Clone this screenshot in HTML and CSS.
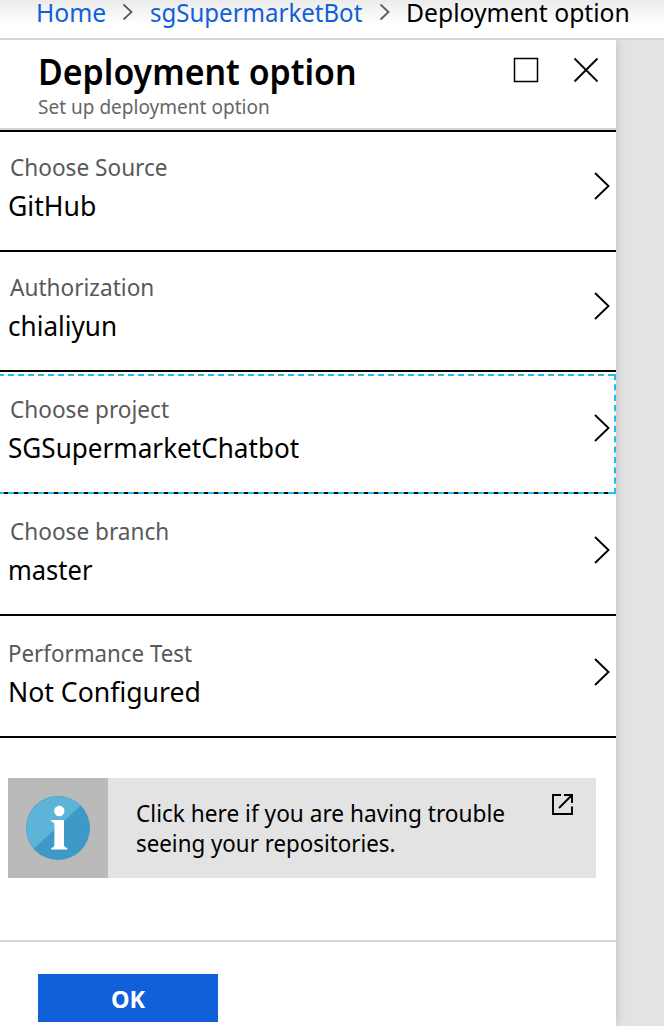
FILE: index.html
```html
<!DOCTYPE html>
<html lang="en">
<head>
<meta charset="utf-8">
<title>Deployment option</title>
<link rel="stylesheet" href="styles.css">
</head>
<body>
<nav class="crumbs">
  <a class="crumb home">Home</a>
  <svg class="sep" width="11" height="18" viewBox="0 0 11 18"><path d="M1.500 1.500L9.500 9L1.500 16.500"/></svg>
  <a class="crumb bot">sgSupermarketBot</a>
  <svg class="sep" width="11" height="18" viewBox="0 0 11 18"><path d="M1.500 1.500L9.500 9L1.500 16.500"/></svg>
  <span class="crumb current">Deployment option</span>
</nav>
<main class="blade">
  <header class="head">
    <div class="heading">
      <h1 class="title">Deployment option</h1>
      <p class="subtitle">Set up deployment option</p>
    </div>
    <svg class="maximize" width="26" height="26" viewBox="0 0 26 26"><rect x="1.500" y="1.500" width="23" height="23"/></svg>
    <svg class="close" width="26" height="26" viewBox="0 0 26 26"><path d="M1.500 1.500L24.500 24.500M24.500 1.500L1.500 24.500"/></svg>
  </header>
  <section class="row">
    <div><div class="label">Choose Source</div><div class="value wide">GitHub</div></div>
    <svg class="arrow" width="18" height="30" viewBox="0 0 18 30"><path d="M2 2L15.500 15L2 28"/></svg>
  </section>
  <section class="row">
    <div><div class="label">Authorization</div><div class="value">chialiyun</div></div>
    <svg class="arrow" width="18" height="30" viewBox="0 0 18 30"><path d="M2 2L15.500 15L2 28"/></svg>
  </section>
  <section class="row tall">
    <div><div class="label">Choose project</div><div class="value">SGSupermarketChatbot</div></div>
    <svg class="arrow" width="18" height="30" viewBox="0 0 18 30"><path d="M2 2L15.500 15L2 28"/></svg>
    <svg class="focus" width="616" height="120" viewBox="0 0 616 120">
      <path stroke-dasharray="6 4" stroke-dashoffset="2" d="M0 1H616M0 119H616"/>
      <path stroke-dasharray="6.200 4.160" d="M615 0V120"/>
    </svg>
  </section>
  <section class="row tall">
    <div><div class="label">Choose branch</div><div class="value narrow">master</div></div>
    <svg class="arrow" width="18" height="30" viewBox="0 0 18 30"><path d="M2 2L15.500 15L2 28"/></svg>
  </section>
  <section class="row tall">
    <div><div class="label performance">Performance Test</div><div class="value wide">Not Configured</div></div>
    <svg class="arrow" width="18" height="30" viewBox="0 0 18 30"><path d="M2 2L15.500 15L2 28"/></svg>
  </section>
  <aside class="notice">
    <div class="badge">
      <svg width="64" height="64" viewBox="0 0 64 64">
        <circle cx="32" cy="32" r="32" fill="#3e99c7"/>
        <path d="M7.600 52.700A32 32 0 0 1 54.800 9.600Z" fill="#5eb4d8"/>
        <circle cx="33.300" cy="15" r="5.200" fill="#fff"/>
        <path d="M25.200 24H38V48.500Q38 51.500 41.300 52V53.500H25.200V52Q28.400 51.500 28.400 48.500V29Q28.400 26 25.200 25.600Z" fill="#fff"/>
      </svg>
    </div>
    <div class="message"><div class="line">Click here if you are having trouble</div><div class="line second">seeing your repositories.</div></div>
    <svg class="external" width="24" height="24" viewBox="0 0 24 24"><path d="M10 2H2V21H21V13.500M13 2H21V10M8 15L20.500 2.500"/></svg>
  </aside>
  <footer class="foot"><button class="ok">OK</button></footer>
</main>
</body>
</html>
```
FILE: styles.css
```css
* { box-sizing: border-box; }
body {
  margin: 0;
  width: 664px;
  height: 1026px;
  overflow: hidden;
  background: #e3e3e3;
  color: #000;
  font-family: "Noto Sans", "Open Sans", sans-serif;
}
svg { display: block; flex: none; fill: none; }
.crumbs {
  display: flex;
  height: 40px;
  padding-left: 36px;
  background: linear-gradient(#ebebeb 0, #fff 24px);
  border-bottom: 2px solid #d4d4d4;
  white-space: nowrap;
}
.crumb {
  flex: none;
  height: 26px;
  font-size: 26px;
  line-height: 25px;
  color: #1160d9;
  transform: scaleX(.95);
  transform-origin: left;
}
.home { width: 86px; }
.bot { width: 229px; transform: scaleX(.924); }
.current { color: #000; margin-left: 16px; }
.sep { margin-top: 3px; stroke: #5c5c5c; stroke-width: 1.8; }
.home + .sep { margin-right: 17px; }
.blade {
  width: 616px;
  height: 986px;
  background: #fff;
  box-shadow: 0 0 10px rgba(0, 0, 0, .18);
  clip-path: inset(0 -20px 0 0);
}
.head {
  display: flex;
  height: 92px;
  padding: 17px 17px 0 38px;
  border-bottom: 2px solid #000;
  box-shadow: inset 0 -2px #d4d4d4;
  white-space: nowrap;
}
.heading { width: 475px; flex: none; }
.title {
  margin: 0;
  font-size: 35.500px;
  line-height: 29px;
  font-weight: 600;
  transform: scaleX(.954);
  transform-origin: left;
}
.subtitle {
  margin: 9px 0 0;
  font-size: 19.500px;
  line-height: 24px;
  color: #666;
  transform: scaleX(.976);
  transform-origin: left;
}
.maximize, .close { stroke: #000; stroke-width: 1.800; }
.maximize { margin-right: 34px; stroke-width: 1.500; }
.row {
  position: relative;
  display: flex;
  justify-content: space-between;
  height: 120px;
  padding: 20px 5px 0 8px;
  border-bottom: 2px solid #000;
  white-space: nowrap;
}
.tall { height: 122px; padding-top: 22px; }
.label {
  padding-left: 2px;
  font-size: 23px;
  line-height: 30px;
  color: #595959;
  transform: scaleX(.983);
  transform-origin: left;
}
.performance { padding-left: 0; transform: scaleX(.97); }
.value {
  margin-top: 8px;
  font-size: 28px;
  line-height: 30px;
  transform: scaleX(.932);
  transform-origin: left;
}
.value.wide { transform: scaleX(.95); }
.value.narrow { transform: scaleX(.91); }
.arrow { margin-top: 19px; stroke: #000; stroke-width: 1.900; }
.focus { position: absolute; left: 0; top: 2px; stroke: #1fbdf0; stroke-width: 2; }
.notice { display: flex; width: 588px; height: 100px; margin: 40px 0 62px 8px; background: #e3e3e3; }
.badge { display: grid; place-items: center; width: 100px; height: 100px; background: #bababa; }
.message { width: 415px; padding: 20px 0 0 28px; }
.line {
  font-size: 24px;
  line-height: 30px;
  white-space: nowrap;
  transform: scaleX(.943);
  transform-origin: left;
}
.second { transform: scaleX(.93); }
.external { margin: 15px 0 0 28px; stroke: #000; stroke-width: 1.900; }
.foot { border-top: 2px solid #d4d4d4; padding: 32px 0 0 38px; }
.ok {
  display: block;
  width: 180px;
  height: 48px;
  padding: 0;
  border: 0;
  background: #1160d9;
  color: #fff;
  font: 700 23.500px/50px "Noto Sans", sans-serif;
}
```
